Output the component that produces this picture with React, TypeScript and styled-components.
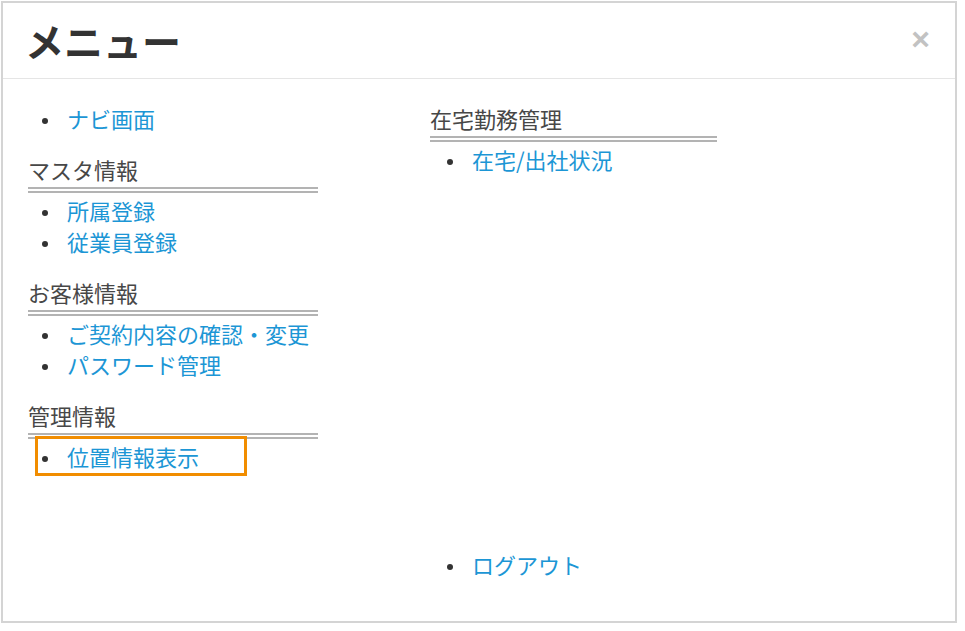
import styled, { createGlobalStyle } from 'styled-components';

const GlobalStyle = createGlobalStyle`
	html, body {
		margin: 0;
		padding: 0;
		background: #ffffff;
	}
	body {
		font-family: "Noto Sans CJK JP", "Noto Sans", sans-serif;
	}
`

const Page = styled.div`
	padding: 1px;
	width: 965px;
	height: 631px;
	box-sizing: border-box;
`

const Dialog = styled.div`
	width: 956px;
	height: 622px;
	box-sizing: border-box;
	border: 2px solid #d4d4d4;
	background: #fff;
	display: flex;
	flex-direction: column;
`

const Header = styled.div`
	height: 75px;
	border-bottom: 1px solid #e5e5e5;
	display: flex;
	align-items: center;
	justify-content: space-between;
	padding: 0 25px 0 22px;
`

const Title = styled.h1`
	margin: 0;
	font-size: 39px;
	font-weight: bold;
	color: #333;
	line-height: 1;
`

const Close = styled.button`
	border: none;
	background: none;
	padding: 0;
	margin-top: -4px;
	font-family: "Liberation Sans", Arial, sans-serif;
	font-size: 32px;
	font-weight: bold;
	line-height: 1;
	color: #c2c2c2;
	cursor: pointer;
`

const Body = styled.div`
	flex: 1;
	display: flex;
	flex-direction: column;
	justify-content: space-between;
	padding: 24px 25px 41px 25px;
`

const Columns = styled.div`
	display: grid;
	grid-template-columns: 290px 287px;
	column-gap: 112px;
	align-items: start;
`

const Column = styled.div`
	display: flex;
	flex-direction: column;
`

const Section = styled.div`
	margin-top: ${props => props.first ? '0' : '20px'};
`

const Heading = styled.div`
	font-size: 22px;
	line-height: 31px;
	color: #474747;
	padding-bottom: 2px;
	border-bottom: 6px double #b3b3b3;
	margin-bottom: 2px;
`

const List = styled.ul`
	margin: 0;
	padding-left: ${props => props.indent || 39}px;
	list-style: none;
	color: #333;
`

const Item = styled.li`
	font-size: 22px;
	line-height: 31px;
	position: relative;

	&::before {
		content: "";
		position: absolute;
		left: -25px;
		top: 15px;
		width: 6px;
		height: 6px;
		border-radius: 50%;
		background: #333;
	}

	${props => props.marked && `
		&::after {
			content: "";
			position: absolute;
			left: -32px;
			top: -5px;
			width: 212px;
			height: 40px;
			box-sizing: border-box;
			border: 3px solid #f18d00;
		}
	`}
`

const Link = styled.a`
	color: #1c96d5;
	text-decoration: none;
`

const Footer = styled.div`
	display: grid;
	grid-template-columns: 290px 287px;
	column-gap: 112px;
`

const App = () => {
	return (
		<Page>
			<GlobalStyle />
			<Dialog>
				<Header>
					<Title>メニュー</Title>
					<Close>×</Close>
				</Header>
				<Body>
					<Columns>
						<Column>
							<Section first>
								<List>
									<Item><Link href="#">ナビ画面</Link></Item>
								</List>
							</Section>
							<Section>
								<Heading>マスタ情報</Heading>
								<List>
									<Item><Link href="#">所属登録</Link></Item>
									<Item><Link href="#">従業員登録</Link></Item>
								</List>
							</Section>
							<Section>
								<Heading>お客様情報</Heading>
								<List>
									<Item><Link href="#">ご契約内容の確認・変更</Link></Item>
									<Item><Link href="#">パスワード管理</Link></Item>
								</List>
							</Section>
							<Section>
								<Heading>管理情報</Heading>
								<List>
									<Item marked><Link href="#">位置情報表示</Link></Item>
								</List>
							</Section>
						</Column>
						<Column>
							<Section first>
								<Heading>在宅勤務管理</Heading>
								<List indent={42}>
									<Item><Link href="#">在宅/出社状況</Link></Item>
								</List>
							</Section>
						</Column>
					</Columns>
					<Footer>
						<div />
						<List indent={42}>
							<Item><Link href="#">ログアウト</Link></Item>
						</List>
					</Footer>
				</Body>
			</Dialog>
		</Page>
	)
}

export default App
